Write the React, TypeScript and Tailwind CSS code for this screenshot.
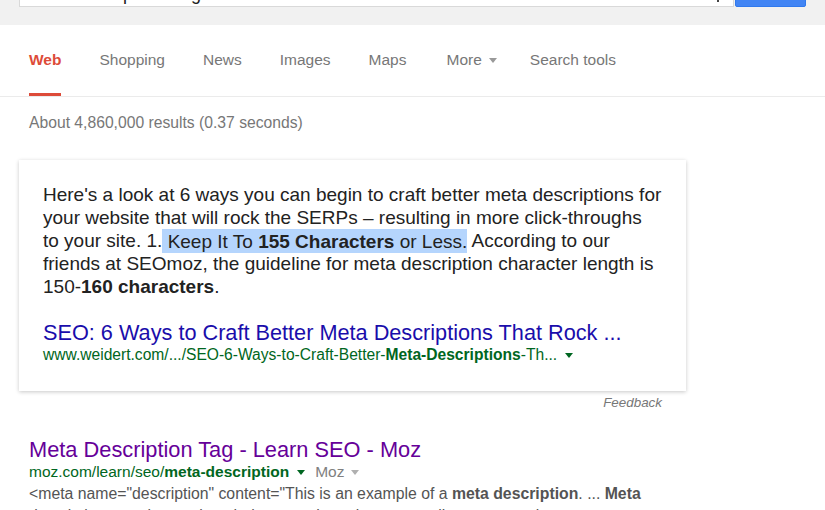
import React from 'react';

const tabs = ['Shopping', 'News', 'Images', 'Maps'];

const Caret = ({ className = '' }: { className?: string }) => (
  <svg width="8" height="5" viewBox="0 0 8 5" className={className}>
    <path d="M0 0h8L4 5z" fill="currentColor" />
  </svg>
);

const App: React.FC = () => {
  return (
    <div className="w-[825px] h-[510px] overflow-hidden bg-white font-['Liberation_Sans',Arial,sans-serif]">
      {/* Search header */}
      <div className="h-[25px] bg-[#f1f1f1] overflow-hidden flex items-start pl-[19px]">
        <div className="-mt-[30px] h-[37px] w-[715px] bg-white border border-[#d9d9d9] pl-[10px] pt-[14px] text-[18px] leading-[18px] text-[#222] flex items-start justify-between pr-[14px]">
          <span>meta description length</span>
          <span className="w-[2px] h-[17px] bg-[#444]" />
        </div>
        <div className="-mt-[30px] ml-[1px] h-[37px] w-[71px] bg-[#4285f4] rounded-b-[2px] border border-[#3079ed]" />
      </div>

      {/* Tabs */}
      <div className="h-[72px] border-b border-[#ebebeb] flex items-end pl-[19px] gap-[18px] text-[15.5px] text-[#777]">
        <div className="px-[10px] h-full flex flex-col justify-end">
          <span className="font-bold text-[#dd4b39] leading-[18px] mb-[24px]">Web</span>
          <div className="h-[3px] bg-[#dd4b39]" />
        </div>
        {tabs.map((t) => (
          <div key={t} className="px-[10px] leading-[18px] pb-[27px]">
            {t}
          </div>
        ))}
        <div className="px-[10px] leading-[18px] pb-[27px] flex items-center gap-[7px] ml-[2px]">
          <span>More</span>
          <Caret className="text-[#999] mt-[1px]" />
        </div>
        <div className="px-[10px] leading-[18px] pb-[27px] -ml-[5px]">Search tools</div>
      </div>

      {/* Results stats */}
      <div className="pl-[29px] pt-[16px] text-[15.7px] leading-[20px] text-[#777]">
        About 4,860,000 results (0.37 seconds)
      </div>

      {/* Answer card */}
      <div className="ml-[19px] mt-[27px] w-[667px] bg-white shadow-[0_1px_4px_rgba(0,0,0,0.22)] px-[24px] pt-[23px] pb-[26px]">
        <p className="text-[19px] leading-[23px] text-[#222] whitespace-nowrap">
          Here's a look at 6 ways you can begin to craft better meta descriptions for
          <br />
          your website that will rock the SERPs – resulting in more click-throughs
          <br />
          to your site. 1.
          <span className="bg-[#b5d5fd] py-[1.5px]">
            {' '}Keep It To <b>155 Characters</b> or Less.
          </span>{' '}
          According to our
          <br />
          friends at SEOmoz, the guideline for meta description character length is
          <br />
          150-<b>160 characters</b>.
        </p>
        <div className="mt-[22px] text-[21.7px] leading-[26px] text-[#1a0dab] whitespace-nowrap">
          SEO: 6 Ways to Craft Better Meta Descriptions That Rock ...
        </div>
        <div className="-mt-[1px] text-[15.6px] leading-[20px] text-[#006621] flex items-center whitespace-nowrap">
          <span>
            www.weidert.com/.../SEO-6-Ways-to-Craft-Better-<b>Meta-Descriptions</b>-Th...
          </span>
          <Caret className="ml-[8px] mt-[1px]" />
        </div>
      </div>

      <div className="w-[662px] text-right pt-[4px] text-[13.4px] leading-[16px] italic text-[#777]">Feedback</div>

      {/* Second result */}
      <div className="pl-[29px] pt-[26px]">
        <div className="text-[21.8px] leading-[26px] text-[#660099] whitespace-nowrap">
          Meta Description Tag - Learn SEO - Moz
        </div>
        <div className="-mt-[1px] text-[15.5px] leading-[20px] text-[#006621] flex items-center whitespace-nowrap">
          <span>
            moz.com/learn/seo/<b>meta-description</b>
          </span>
          <Caret className="ml-[8px] mt-[1px]" />
          <span className="ml-[10px] text-[#808080]">Moz</span>
          <Caret className="ml-[7px] mt-[1px] text-[#b0b0b0]" />
        </div>
        <div className="mt-[1px] text-[15.8px] leading-[22px] text-[#545454] whitespace-nowrap">
          &lt;meta name="description" content="This is an example of a <b>meta description</b>. ... <b>Meta</b>
          <br />
          descriptions can be any length, but search engines generally truncate snippets
        </div>
      </div>
    </div>
  );
};

export default App;
